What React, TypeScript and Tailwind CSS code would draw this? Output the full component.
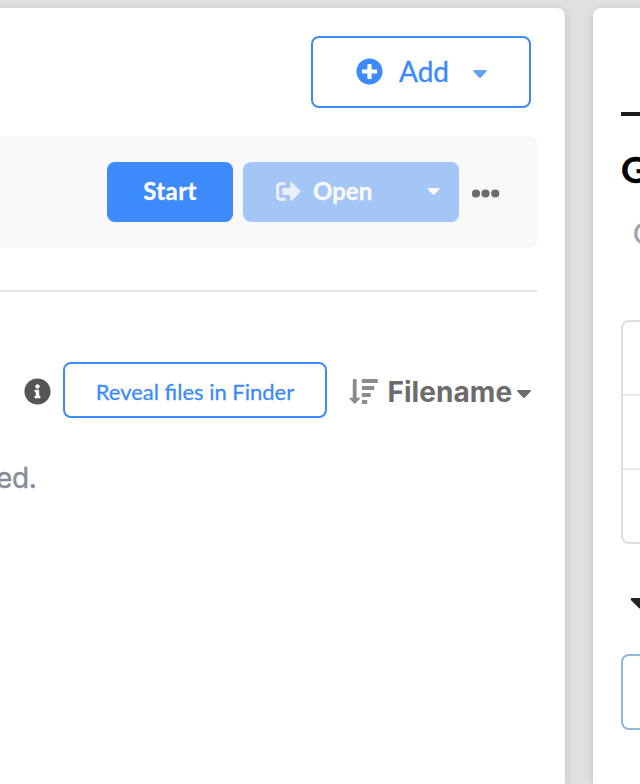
import React from "react";
import { FaCaretDown, FaInfoCircle, FaPlusCircle, FaSignOutAlt } from "react-icons/fa";

function Caret({ className }: { className: string }) {
  return (
    <svg viewBox="0 0 14 8" className={className} fill="currentColor">
      <path d="M1 0h12c.9 0 1.2.8.6 1.400L7.900 7.500c-.5.5-1.300.5-1.800 0L.4 1.400C-.2.8.1 0 1 0z" />
    </svg>
  );
}

function SortIcon() {
  return (
    <svg viewBox="0 0 29 26" className="h-[26px] w-[29px] shrink-0 text-[#8c8c8c]" fill="currentColor">
      <path d="M4.600 0h2.200q.8 0 .8.8V18.800h2.900q1.100 0 .5.9l-4.700 4.900q-.6.6-1.200 0L.5 19.700q-.6-.9.5-.9h2.800V.8q0-.8.8-.8z" />
      <rect x="12.800" y="0" width="16" height="4" rx=".8" />
      <rect x="12.800" y="7" width="12.500" height="4" rx=".8" />
      <rect x="12.800" y="14" width="9" height="4" rx=".8" />
      <rect x="12.800" y="21" width="5.500" height="4" rx=".8" />
    </svg>
  );
}

function MainPanel() {
  return (
    <main className="h-full w-[565px] shrink-0 rounded-tr-lg bg-white pt-7 shadow-[0_2px_10px_rgba(0,0,0,0.13)]">
      <div className="flex justify-end pr-[34px]">
        <button className="flex h-[72px] w-[220px] items-center rounded-lg border-2 border-[#3d8bfa] pl-[43px] text-[28px] text-[#3d8bfa]">
          <FaPlusCircle className="mb-0.5 size-[27px] shrink-0" />
          <span className="mb-0.5 ml-4 w-[74px] text-left [-webkit-text-stroke:0.4px]">Add</span>
          <Caret className="mt-[3px] h-2 w-3.5 opacity-80" />
        </button>
      </div>
      <section className="mr-7 mt-7 flex h-28 items-center rounded-r-lg bg-[#f8f8f8] pl-[107px]">
        <button className="h-[60px] w-[126px] rounded-lg bg-[#3d8bfa] pb-0.5 text-2xl font-bold tracking-[0.4px] text-white [-webkit-text-stroke:0.3px]">
          Start
        </button>
        <button className="ml-2.5 flex h-[60px] w-[216px] items-center rounded-lg bg-[#a4c6f7] pb-0.5 pl-[33px] text-2xl font-bold text-[#fafafa]">
          <FaSignOutAlt className="size-[25px] shrink-0 opacity-80" />
          <span className="ml-3 w-[114px] text-left [-webkit-text-stroke:0.3px]">Open</span>
          <Caret className="h-[7px] w-[13px]" />
        </button>
        <svg viewBox="0 0 28 9" className="ml-[13px] mt-[3px] h-[9px] w-7" fill="#6b6b6b">
          <circle cx="4" cy="4.500" r="4.100" />
          <circle cx="13.500" cy="4.500" r="4.100" />
          <circle cx="23.200" cy="4.500" r="4.100" />
        </svg>
      </section>
      <hr className="mr-7 mt-[42px] border-t-2 border-[#e3e3e4]" />
      <div className="mt-[70px] flex h-14 items-center pl-6">
        <FaInfoCircle className="mt-0.5 size-[27px] shrink-0 text-[#555]" />
        <button className="ml-3 h-14 w-[264px] shrink-0 rounded-lg border-2 border-[#3d8bfa] pt-0.5 text-[22px] text-[#3d8bfa] [-webkit-text-stroke:0.3px]">
          Reveal files in Finder
        </button>
        <div className="ml-[22px] mt-1 flex items-center">
          <SortIcon />
          <span className="ml-[9.500px] w-[129.500px] font-[Inter,sans-serif] text-[28px] font-bold tracking-[0.050px] text-[#6c6c6c]">Filename</span>
          <Caret className="mt-[3px] h-2 w-3.5 shrink-0 text-[#6c6c6c]" />
        </div>
      </div>
      <p className="mt-10 -indent-[4px] font-[Inter,sans-serif] text-[28px] leading-10 tracking-[-0.3px] text-[#868c99] [-webkit-text-stroke:0.4px]">ed.</p>
    </main>
  );
}

function SidePanel() {
  return (
    <aside className="h-full w-[400px] shrink-0 rounded-tl-lg bg-white pl-7 shadow-[0_2px_10px_rgba(0,0,0,0.13)]">
      <div className="mt-[104px] h-1 bg-[#1b1c1d]" />
      <h2 className="mt-8 text-[36px] font-bold leading-[42px] text-black [-webkit-text-stroke:0.4px]">G</h2>
      <p className="ml-3 mt-[25px] text-[28px] leading-9 text-[#9aa3ad] [-webkit-text-stroke:0.4px]">C</p>
      <div className="mt-[69px] h-56 divide-y-2 divide-[#e8e8e8] rounded-lg border-2 border-[#dededf]">
        <div className="h-[74px]" />
        <div className="h-[74px]" />
        <div className="h-[72px]" />
      </div>
      <FaCaretDown className="ml-[3px] mt-[42px] size-8 text-[#222]" />
      <div className="mt-[36px] h-[76px] rounded-lg border-2 border-[#91b7d9]" />
    </aside>
  );
}

export default function App() {
  return (
    <div className="flex h-[784px] w-[640px] gap-7 overflow-hidden bg-[#e0e0e0] pt-2 font-[Lato,sans-serif]">
      <MainPanel />
      <SidePanel />
    </div>
  );
}
